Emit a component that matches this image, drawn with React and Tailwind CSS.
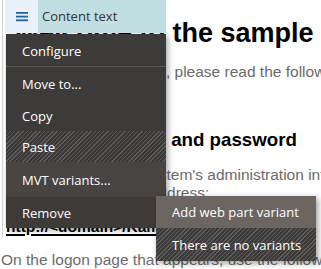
import React from 'react';

const hatch =
  'bg-[repeating-linear-gradient(135deg,#5c5a58_0px,#5c5a58_1px,#3b3937_1px,#3b3937_3px)]';

const menuItems = [
  { label: 'Configure', cls: 'h-[33px] border-b border-[#5a5755] bg-[#3d3b39]' },
  { label: 'Move to...', cls: 'h-[32px] bg-[#3d3b39]' },
  { label: 'Copy', cls: 'h-[32px] bg-[#3d3b39]' },
  { label: 'Paste', cls: 'h-[31px] ' + hatch },
  { label: 'MVT variants...', cls: 'h-[35px] bg-[#474442]' },
  { label: 'Remove', cls: 'h-[31px] bg-[#3d3a38]' },
];

function Hamburger() {
  return (
    <svg width="12" height="10" viewBox="0 0 12 10">
      <rect x="0" y="0" width="12" height="1.8" fill="#2062a2" />
      <rect x="0" y="3.7" width="12" height="1.8" fill="#2062a2" />
      <rect x="0" y="7.4" width="12" height="1.8" fill="#2062a2" />
    </svg>
  );
}

export default function App() {
  return (
    <div className="relative w-[321px] h-[269px] overflow-hidden bg-white font-['Liberation_Sans',Arial,sans-serif]">
      {/* page behind the menu */}
      <div className="ml-[2px] border-l border-[#d6d6d6] pt-[18px] pb-[2px] whitespace-nowrap">
        <h1 className="ml-[11px] text-[27px] leading-[31px] font-bold text-black">
          Welcome to the sample site
        </h1>
        <p className="ml-[44px] mt-[14px] text-[15.5px] leading-[18px] text-[#6b6b6b]">
          To set up the app, please read the following information.
        </p>
        <h3 className="ml-[23px] mt-[48px] text-[18.72px] leading-[22px] font-bold text-black">
          Your user name and password
        </h3>
        <p className="mt-[15px] text-[15.5px] leading-[18px] text-[#6b6b6b]">
          <span className="block ml-[36px]">Log in with the system's administration interface</span>
          <span className="block ml-[21px]">from the following address:</span>
        </p>
        <p className="ml-[3px] mt-[16px] text-[15.5px] leading-[18px] font-bold text-black underline decoration-2 underline-offset-2">
          http://&lt;domain&gt;/Kamino/logon
        </p>
      </div>
      <p className="ml-[1px] mt-[13px] whitespace-nowrap text-[15.5px] leading-[18px] text-[#6b6b6b]">
        On the logon page that appears, use the following credentials.
      </p>

      {/* web part toolbar and context menu */}
      <div className="absolute left-[5px] top-0 w-[161px] font-['Open_Sans',sans-serif]">
        <div className="flex h-[33px]">
          <div className="flex w-[33px] items-center justify-center bg-[#e9f1fa]">
            <Hamburger />
          </div>
          <div className="flex flex-1 items-center bg-[#c1dee2] pl-[4px] text-[13px] text-[#333]">
            Content text
          </div>
        </div>
        <div className="ml-[1px] mt-[1px] w-[160px] shadow-[2px_2px_6px_rgba(0,0,0,0.35)]">
          {menuItems.map((item) => (
            <div
              key={item.label}
              className={'flex items-center pl-[16px] pt-[3px] text-[13px] text-white ' + item.cls}
            >
              {item.label}
            </div>
          ))}
        </div>
      </div>

      <div className="absolute left-[156px] top-[196px] w-[160px] font-['Open_Sans',sans-serif] text-[13px] text-white shadow-[2px_2px_6px_rgba(0,0,0,0.4)]">
        <div className="flex h-[32px] items-center bg-[#6b6661] pl-[16px] pt-[2px]">
          Add web part variant
        </div>
        <div className="flex h-[33px] items-center pl-[16px] pt-[2px] bg-[repeating-linear-gradient(135deg,#5e5c5a_0px,#5e5c5a_1px,#3d3b39_1px,#3d3b39_3px)]">
          There are no variants
        </div>
      </div>
    </div>
  );
}
